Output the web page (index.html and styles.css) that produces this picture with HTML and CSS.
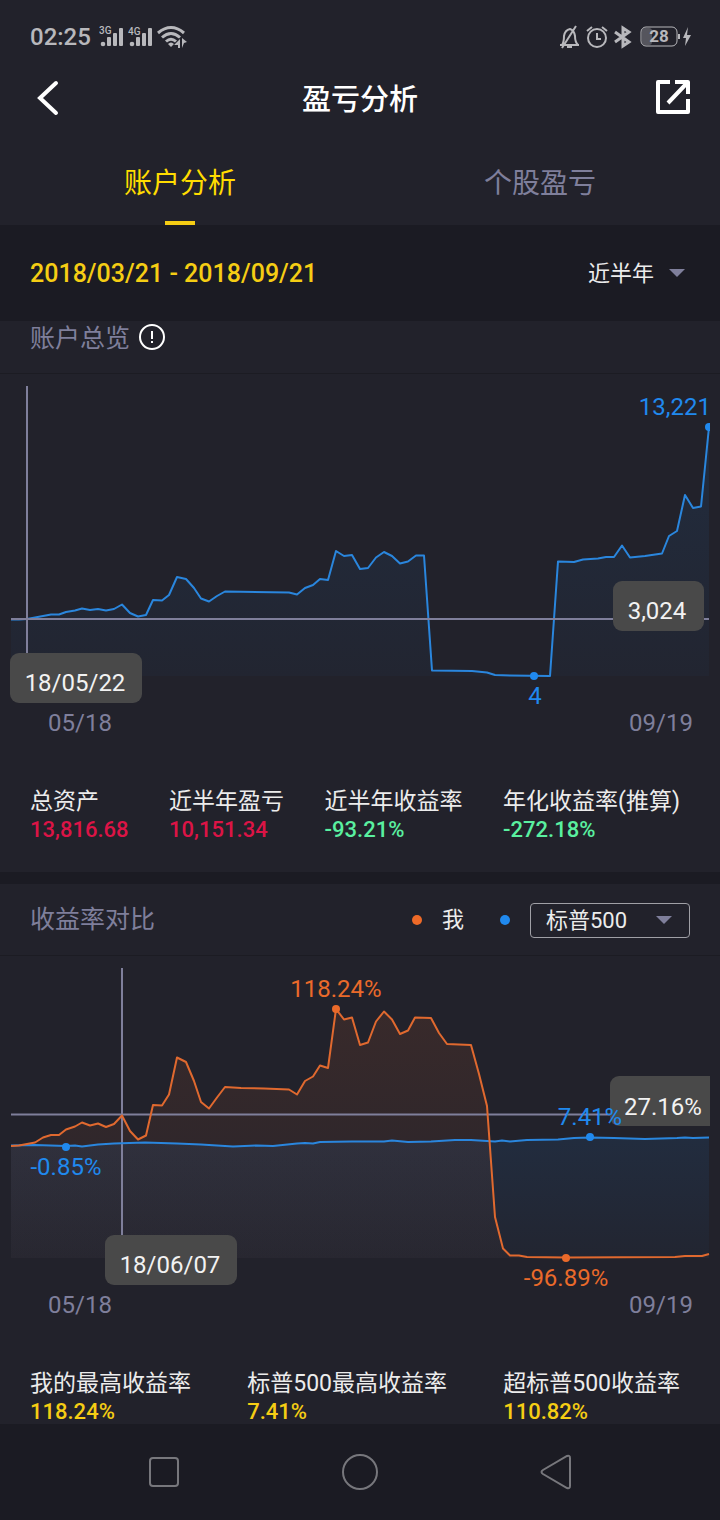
FILE: index.html
```html
<!DOCTYPE html>
<html lang="zh-CN">

<head>
    <meta charset="utf-8">
    <meta name="viewport" content="width=device-width, initial-scale=1.0">
    <title>盈亏分析</title>
    <link rel="stylesheet" href="styles.css">
</head>

<body>

    <header class="top">
        <div class="statusbar">
            <span class="clock">02:25</span>
            <svg class="signal" width="25" height="24" viewBox="0 0 25 24">
                <text x="0" y="9">3G</text>
                <circle cx="4" cy="19" r="2.3"></circle>
                <rect x="8" y="12" width="4" height="9" rx="1"></rect>
                <rect x="14" y="8" width="4" height="13" rx="1"></rect>
                <rect x="20" y="3" width="4" height="18" rx="1"></rect>
            </svg>
            <svg class="signal" width="25" height="24" viewBox="0 0 25 24">
                <text x="0" y="10">4G</text>
                <circle cx="4" cy="19" r="2.3"></circle>
                <rect x="8" y="12" width="4" height="9" rx="1"></rect>
                <rect x="14" y="8" width="4" height="13" rx="1"></rect>
                <rect x="20" y="3" width="4" height="18" rx="1"></rect>
            </svg>
            <svg class="wifi" width="30" height="24" viewBox="0 0 30 24">
                <path d="M1 8 Q14 -3 27 8 M5 12.5 Q14 4.5 23 12.5 M9 16.5 Q14 12 19 16.5" fill="none" stroke-width="3"></path>
                <path d="M11 19 Q14 16 17 19 L14 22 Z" stroke="none"></path>
                <path d="M23 14 V23 H21 V20 H17 Z M25 13 L30 17 L27 18 L25 23 Z" stroke="none"></path>
            </svg>

            <div class="statusbar-right">
                <svg width="22" height="24" viewBox="0 0 22 24" fill="none" stroke-width="2">
                    <path d="M1 20 H20 M3 20 Q5 17 5 11 Q6 5 11 4 Q15 5 16 11 Q16 17 19 20 M8 22 H13 M3 23 L17 1"></path>
                </svg>
                <svg width="22" height="24" viewBox="0 0 22 24" fill="none" stroke-width="2">
                    <circle cx="11" cy="13" r="9"></circle>
                    <path d="M11 8 V14 H15 M1 6 L6 2 M16 2 L21 6"></path>
                </svg>
                <svg width="20" height="24" viewBox="0 0 20 24" fill="none" stroke-width="3">
                    <path d="M2 7 L16 17 L10 21 V3 L16 7 L2 17"></path>
                </svg>
                <svg class="battery" width="54" height="24" viewBox="0 0 54 24">
                    <rect x="4" y="3" width="10" height="17" rx="3" class="battery-level"></rect>
                    <rect x="3" y="2" width="36" height="19" rx="5" fill="none"></rect>
                    <text x="21" y="17">28</text>
                    <path d="M40 9 h2 v5 h-2 Z M50 2 L45 13 H48 L47 21 L53 10 H49 Z" stroke="none"></path>
                </svg>
            </div>
        </div>

        <div class="titlebar">
            <button class="icon-button" aria-label="返回">
                <svg width="36" height="36" viewBox="0 0 36 36" fill="none">
                    <path d="M27 3 L11 18 L27 33" stroke-width="4" stroke-linecap="round"></path>
                </svg>
            </button>
            <h1>盈亏分析</h1>
            <button class="icon-button" aria-label="分享">
                <svg width="36" height="36" viewBox="0 0 36 36" fill="none" stroke-width="4" stroke-linejoin="round">
                    <path d="M15 2 H3 V32 H33 V19"></path>
                    <path d="M20 2 H33 V14 M33 2 L13 23"></path>
                </svg>
            </button>
        </div>

        <nav class="tabs">
            <button class="tab active">账户分析</button>
            <button class="tab">个股盈亏</button>
        </nav>
    </header>

    <div class="period">
        <span class="dates">2018/03/21 - 2018/09/21</span>
        <div class="dropdown">
            <select aria-label="时间范围">
                <option>近半年</option>
            </select>
        </div>
    </div>

    <section class="card">
        <div class="card-head overview-head">
            <h2>账户总览</h2>
            <svg class="info" width="28" height="32" viewBox="0 -2 28 32">
                <circle cx="14" cy="14" r="12" fill="none" stroke-width="2"></circle>
                <path d="M13 8 h2 v8 h-2 Z M13 18 h2 v2 h-2 Z" stroke="none"></path>
            </svg>
        </div>

        <svg class="chart" viewBox="0 0 720 370">
            <defs>
                <linearGradient id="blueFill" x1="0" y1="0" x2="0" y2="1">
                    <stop offset="0" stop-color="#2089ee" stop-opacity=".1"></stop>
                    <stop offset="1" stop-color="#2089ee" stop-opacity=".03"></stop>
                </linearGradient>
                <linearGradient id="orangeFill" x1="0" y1="0" x2="0" y2="1">
                    <stop offset="0" stop-color="#ee6a28" stop-opacity=".11"></stop>
                    <stop offset="1" stop-color="#ee6a28" stop-opacity=".03"></stop>
                </linearGradient>
                <clipPath id="plot">
                    <rect x="10" y="0" width="700" height="370"></rect>
                </clipPath>
            </defs>

            <polygon fill="url(#blueFill)" points="11,302 11,245.5 19,245.5 27,245 35,243.5 43,242 51,240.5 59,240.5 66,238 75,236.5 82,234.5 90,236 98,235 106,236.5 114,235 122,230.5 130,239 138,242.5 146,241 153,226 162,226.5 169,221 177,203 186,205 194,214 201,224.5 209,227.5 217,222 225,217.5 289,218.5 297,220.5 305,214 313,211 320,205 328,206 336,177 344,182 352,181 360,195 368,194 376,183.5 384,178 392,182 400,189.5 408,187.5 416,181.5 424,181.5 432,296.5 472,297 487,298.5 495,301 510,301.5 550,302 558,187.5 574,188 583,185.5 598,184.5 606,183 614,183 622,171.5 630,183.5 645,182 662,179.5 669,162 677,157 685,121 693,134 701,132.5 709,53 709,302"></polygon>
            <polyline class="line blue" points="11,245.5 19,245.5 27,245 35,243.5 43,242 51,240.5 59,240.5 66,238 75,236.5 82,234.5 90,236 98,235 106,236.5 114,235 122,230.5 130,239 138,242.5 146,241 153,226 162,226.5 169,221 177,203 186,205 194,214 201,224.5 209,227.5 217,222 225,217.5 289,218.5 297,220.5 305,214 313,211 320,205 328,206 336,177 344,182 352,181 360,195 368,194 376,183.5 384,178 392,182 400,189.5 408,187.5 416,181.5 424,181.5 432,296.5 472,297 487,298.5 495,301 510,301.5 550,302 558,187.5 574,188 583,185.5 598,184.5 606,183 614,183 622,171.5 630,183.5 645,182 662,179.5 669,162 677,157 685,121 693,134 701,132.5 709,53"></polyline>

            <g class="cross">
                <line x1="27" x2="27" y1="12" y2="280"></line>
                <line x1="11" x2="709" y1="245" y2="245"></line>
            </g>

            <g class="blue-mark" clip-path="url(#plot)">
                <circle cx="709" cy="53" r="4"></circle>
                <circle cx="534" cy="302" r="4"></circle>
            </g>
            <text class="blue-mark" x="711" y="41" text-anchor="end">13,221</text>
            <text class="blue-mark" x="535" y="330" text-anchor="middle">4</text>

            <g class="tip">
                <rect x="10" y="279" width="132" height="50" rx="9"></rect>
                <text x="75" y="317">18/05/22</text>
                <rect x="613" y="207" width="91" height="50" rx="9"></rect>
                <text x="657" y="245">3,024</text>
            </g>

            <g class="axis">
                <text x="80" y="357">05/18</text>
                <text x="661" y="357">09/19</text>
            </g>
        </svg>

        <dl class="stats">
            <div>
                <dt>总资产</dt>
                <dd class="red">13,816.68</dd>
            </div>
            <div>
                <dt>近半年盈亏</dt>
                <dd class="red">10,151.34</dd>
            </div>
            <div>
                <dt>近半年收益率</dt>
                <dd class="green">-93.21%</dd>
            </div>
            <div>
                <dt>年化收益率(推算)</dt>
                <dd class="green">-272.18%</dd>
            </div>
        </dl>
    </section>

    <section class="card compare">
        <div class="card-head compare-head">
            <h2>收益率对比</h2>
            <div class="legend">
                <span class="dot orange-dot"></span>
                <span class="me">我</span>
                <span class="dot blue-dot"></span>
                <div class="dropdown boxed">
                    <select aria-label="对比指数">
                        <option>标普500</option>
                    </select>
                </div>
            </div>
        </div>

        <svg class="chart" viewBox="0 0 720 370">
            <polygon fill="url(#blueFill)" points="11,302 11,189.5 35,189 66,190 75,189.5 82,190.5 98,188.5 114,187.5 145,186.5 177,187.5 201,188.5 217,189.5 233,190.5 257,189.5 273,190 297,187.5 305,187 313,187.5 320,186 352,185.5 384,185.5 392,184.5 408,186 431,185.5 455,184 471,184 495,185.5 502,184.5 510,185.5 527,184 558,183.5 574,182 590,181.5 614,182 645,183 677,182 685,181.5 693,182 709,181.5 709,302"></polygon>
            <polygon fill="url(#orangeFill)" points="11,302 11,190 19,189.5 27,188 35,186.5 43,181.5 51,179 59,179 66,173.5 75,170.5 82,166.5 90,169.5 98,167.5 106,171 114,168 122,159.5 130,175 138,183.5 146,179.5 153,149 162,149.5 169,138.5 177,101.5 186,106 194,125 201,146 209,152.5 217,141.5 225,131 241,132 264,132.5 289,133.5 297,138.5 305,125 313,120.5 320,109.5 328,112 336,53 344,63.5 352,61.5 360,89 368,86.5 376,65.5 384,55.5 392,63.5 400,78 408,74.5 415,61.5 431,62 439,77 447,88 471,89 479,118 487,150 495,261 503,292.5 510,299.5 519,299.5 527,301 566,301.5 675,301 685,300 702,300 709,298 709,302"></polygon>

            <g class="cross">
                <line x1="122" x2="122" y1="12" y2="280"></line>
                <line x1="11" x2="709" y1="158.5" y2="158.5"></line>
            </g>

            <polyline class="line blue" points="11,189.5 35,189 66,190 75,189.5 82,190.5 98,188.5 114,187.5 145,186.5 177,187.5 201,188.5 217,189.5 233,190.5 257,189.5 273,190 297,187.5 305,187 313,187.5 320,186 352,185.5 384,185.5 392,184.5 408,186 431,185.5 455,184 471,184 495,185.5 502,184.5 510,185.5 527,184 558,183.5 574,182 590,181.5 614,182 645,183 677,182 685,181.5 693,182 709,181.5"></polyline>
            <polyline class="line orange" points="11,190 19,189.5 27,188 35,186.5 43,181.5 51,179 59,179 66,173.5 75,170.5 82,166.5 90,169.5 98,167.5 106,171 114,168 122,159.5 130,175 138,183.5 146,179.5 153,149 162,149.5 169,138.5 177,101.5 186,106 194,125 201,146 209,152.5 217,141.5 225,131 241,132 264,132.5 289,133.5 297,138.5 305,125 313,120.5 320,109.5 328,112 336,53 344,63.5 352,61.5 360,89 368,86.5 376,65.5 384,55.5 392,63.5 400,78 408,74.5 415,61.5 431,62 439,77 447,88 471,89 479,118 487,150 495,261 503,292.5 510,299.5 519,299.5 527,301 566,301.5 675,301 685,300 702,300 709,298"></polyline>

            <g class="tip" clip-path="url(#plot)">
                <rect x="105" y="279" width="132" height="50" rx="9"></rect>
                <text x="170" y="317">18/06/07</text>
                <rect x="610" y="120" width="115" height="50" rx="9"></rect>
                <text x="663" y="159">27.16%</text>
            </g>

            <g class="orange-mark" text-anchor="middle">
                <circle cx="336" cy="53" r="4"></circle>
                <text x="336" y="41">118.24%</text>
                <circle cx="566" cy="302" r="4"></circle>
                <text x="566" y="330">-96.89%</text>
            </g>
            <g class="blue-mark" text-anchor="middle">
                <circle cx="66" cy="191" r="4"></circle>
                <text x="66" y="219">-0.85%</text>
                <circle cx="590" cy="181" r="4"></circle>
                <text x="590" y="169">7.41%</text>
            </g>

            <g class="axis">
                <text x="80" y="357">05/18</text>
                <text x="661" y="357">09/19</text>
            </g>
        </svg>

        <dl class="stats">
            <div>
                <dt>我的最高收益率</dt>
                <dd class="yellow">118.24%</dd>
            </div>
            <div>
                <dt>标普500最高收益率</dt>
                <dd class="yellow">7.41%</dd>
            </div>
            <div>
                <dt>超标普500收益率</dt>
                <dd class="yellow">110.82%</dd>
            </div>
        </dl>
    </section>

    <nav class="navbar">
        <button class="icon-button" aria-label="最近任务">
            <svg width="36" height="36" viewBox="0 0 36 36"><rect x="4" y="4" width="28" height="28" rx="3"></rect></svg>
        </button>
        <button class="icon-button" aria-label="主页">
            <svg width="36" height="36" viewBox="0 0 36 36"><circle cx="18" cy="18" r="17"></circle></svg>
        </button>
        <button class="icon-button" aria-label="后退">
            <svg width="36" height="36" viewBox="0 0 36 36"><path d="M29 2 Q32 1 32 4 V32 Q32 35 29 34 L5 20 Q2 18 5 16 Z"></path></svg>
        </button>
    </nav>

</body>

</html>
```
FILE: styles.css
```css
* {
    box-sizing: border-box;
}

body {
    margin: 0;
    background-color: #1b1b23;
    color: #ececec;
    font-family: Roboto, "Noto Sans CJK SC", sans-serif;
    font-size: 23px;
}

h1,
h2,
dl,
dd {
    margin: 0;
    font-weight: 400;
}

button,
select {
    border: 0;
    padding: 0;
    background: none;
    color: inherit;
    font: inherit;
}

svg {
    display: block;
    flex: none;
}

.icon-button {
    stroke: #fff;
}

/* top */
.top,
.card {
    background-color: #22222b;
}

.statusbar {
    display: flex;
    align-items: center;
    gap: 4px;
    height: 74px;
    padding: 0 28px 0 30px;
    color: #b8b8bc;
    fill: #b8b8bc;
}

.statusbar svg {
    stroke: #b8b8bc;
}

.statusbar svg[fill="none"] {
    fill: none;
}

.statusbar text {
    stroke: none;
}

.clock {
    margin-right: 4px;
    font-size: 24px;
    font-weight: 500;
}

.statusbar .signal {
    stroke: none;
}

.signal text {
    font-size: 10px;
    font-weight: 500;
}

.statusbar-right {
    display: flex;
    gap: 5px;
    margin-left: auto;
}

.battery text {
    font-size: 17px;
    font-weight: 700;
    text-anchor: middle;
}

.battery .battery-level {
    fill: #55555d;
    stroke: none;
}

.titlebar {
    display: flex;
    justify-content: space-between;
    align-items: center;
    height: 48px;
    padding: 0 29px;
}

.titlebar h1 {
    padding-bottom: 3px;
    font-size: 29px;
    font-weight: 500;
    color: #fff;
}

.tabs {
    display: flex;
    padding-top: 45px;
}

.tab {
    flex: 1;
    display: flex;
    flex-direction: column;
    align-items: center;
    height: 58px;
    font-size: 28px;
    line-height: 34px;
    color: #7f7f9b;
}

.tab.active {
    color: #ffdc00;
}

.tab.active::after {
    content: "";
    width: 30px;
    height: 4px;
    margin-top: auto;
    background-color: #f5cd14;
}

/* period */
.period {
    display: flex;
    justify-content: space-between;
    align-items: center;
    height: 96px;
    padding: 0 35px 0 30px;
}

.dates {
    font-size: 25px;
    font-weight: 500;
    color: #f5cd14;
}

.dropdown {
    position: relative;
    font-size: 22px;
}

.dropdown select {
    appearance: none;
    padding-right: 30px;
}

.dropdown::after {
    content: "";
    position: absolute;
    top: 50%;
    right: 0;
    margin-top: -4px;
    border: 8px solid transparent;
    border-top-color: #7f7f9b;
    border-bottom: 0;
    pointer-events: none;
}

.boxed select {
    width: 160px;
    height: 35px;
    padding: 1px 32px 0 15px;
    border: 1px solid #a0a0a6;
    border-radius: 4px;
}

.boxed::after {
    right: 18px;
}

/* cards */
.card-head {
    display: flex;
    padding: 18px 30px 17px;
    border-bottom: 1px solid #1c1c23;
}

.card-head h2 {
    font-size: 25px;
    line-height: 36px;
    color: #7f7f9b;
}

.overview-head {
    align-items: flex-start;
    gap: 8px;
    padding-top: 0;
    padding-bottom: 16px;
}

.info {
    fill: #fff;
    stroke: #fff;
}

.compare {
    margin-top: 12px;
}

.compare-head {
    justify-content: space-between;
}

.legend {
    display: flex;
    align-items: center;
    font-size: 22px;
}

.dot {
    width: 10px;
    height: 10px;
    border-radius: 50%;
}

.orange-dot {
    background-color: #ee6a28;
}

.blue-dot {
    background-color: #2089ee;
    margin-right: 20px;
}

.me {
    margin: 0 36px 0 20px;
    line-height: 34px;
}

/* charts */
.chart {
    width: 100%;
    height: auto;
}

.chart text {
    font-size: 24px;
}

.line {
    fill: none;
    stroke-width: 2;
    stroke-linejoin: round;
}

.blue {
    stroke: #2a86dd;
}

.orange {
    stroke: #e0692f;
}

.blue-mark {
    fill: #2089ee;
}

.orange-mark {
    fill: #ea6a2a;
}

.cross {
    stroke: #7f7f9b;
    stroke-width: 2;
}

.tip {
    fill: #494949;
}

.tip text {
    fill: #f2f2f2;
    text-anchor: middle;
}

.axis {
    fill: #7f7f9b;
    text-anchor: middle;
}

/* stats */
.stats {
    display: flex;
    justify-content: space-between;
    padding: 43px 40px 30px 30px;
}

.compare .stats {
    padding-bottom: 0;
}

.stats dt {
    line-height: 30px;
}

.stats dd {
    font-size: 22px;
    font-weight: 500;
    line-height: 25px;
}

.red {
    color: #dc1446;
}

.green {
    color: #5af0a0;
}

.yellow {
    color: #f5cd14;
}

/* bottom */
.navbar {
    display: grid;
    grid-template-columns: repeat(3, 1fr);
    justify-items: center;
    align-items: center;
    height: 96px;
    padding: 0 66px;
}

.navbar svg {
    fill: none;
    stroke: #77777c;
    stroke-width: 2;
}
```
